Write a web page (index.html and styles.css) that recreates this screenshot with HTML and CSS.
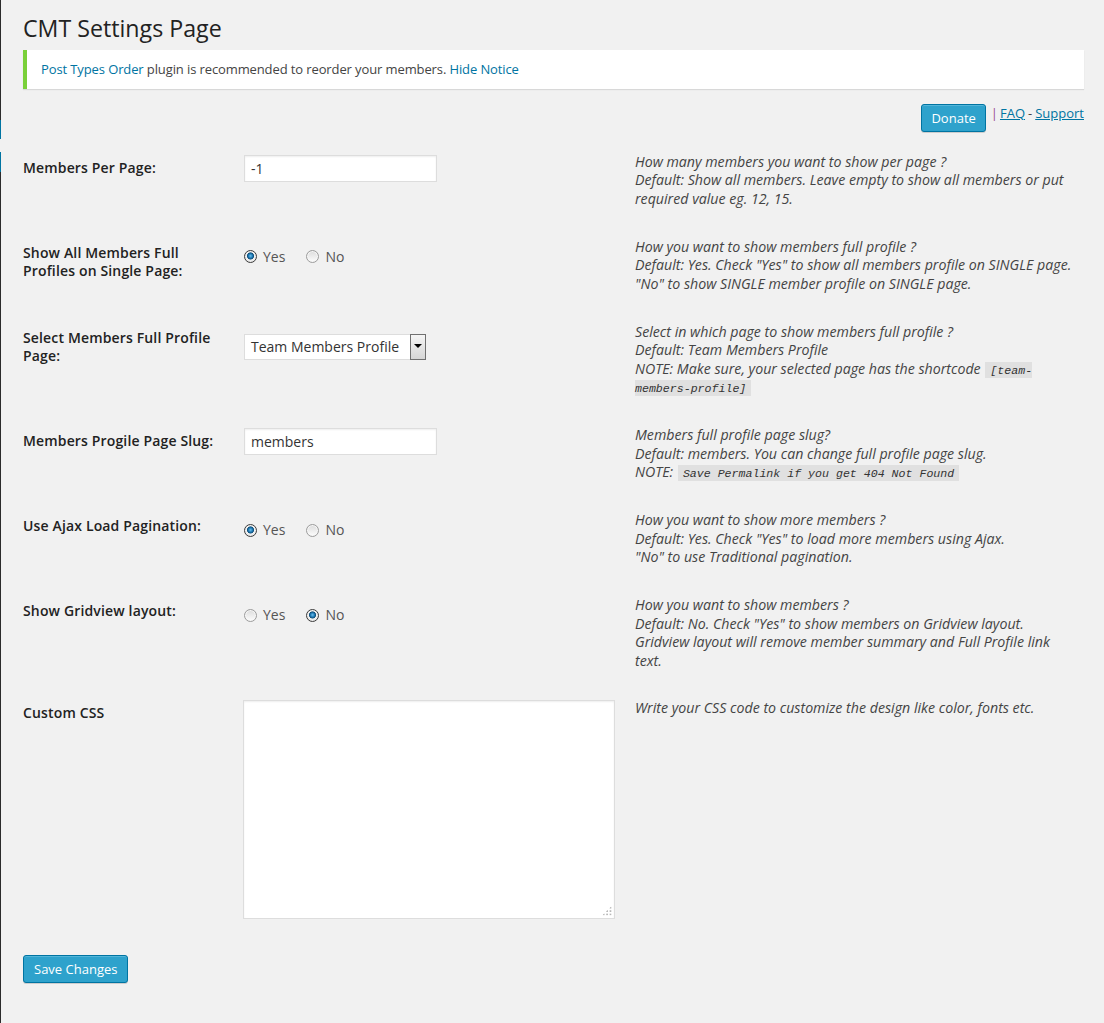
FILE: index.html
```html
<!DOCTYPE html>
<html lang="en">
<head>
<meta charset="utf-8">
<title>CMT Settings Page</title>
<link rel="stylesheet" href="styles.css">
</head>
<body>
<div class="page">
  <div class="edge">
    <span class="seg seg-dark1"></span>
    <span class="seg seg-blue1"></span>
    <span class="seg seg-gap"></span>
    <span class="seg seg-blue2"></span>
    <span class="seg seg-dark2"></span>
  </div>
  <div class="wrap">
    <h2 class="title">CMT Settings Page</h2>
    <div class="notice">
      <p><a class="link" href="#">Post Types Order</a> plugin is recommended to reorder your members. <a class="link" href="#">Hide Notice</a></p>
    </div>
    <div class="toplinks">
      <button class="btn btn-donate" type="button">Donate</button>
      <span class="sep">|</span>
      <a class="ulink" href="#">FAQ</a>
      <span class="dash">-</span>
      <a class="ulink" href="#">Support</a>
    </div>

    <div class="form">
      <div class="row">
        <div class="label">Members Per Page:</div>
        <div class="ctrl"><input class="text" type="text" value="-1"></div>
        <div class="desc">How many members you want to show per page ?<br>Default: Show all members. Leave empty to show all members or put required value eg. 12, 15.</div>
      </div>

      <div class="row">
        <div class="label">Show All Members Full Profiles on Single Page:</div>
        <div class="ctrl">
          <div class="radios">
            <label class="opt"><input class="radio" type="radio" name="full" checked><span>Yes</span></label>
            <label class="opt"><input class="radio" type="radio" name="full"><span>No</span></label>
          </div>
        </div>
        <div class="desc">How you want to show members full profile ?<br>Default: Yes. Check "Yes" to show all members profile on SINGLE page.<br>"No" to show SINGLE member profile on SINGLE page.</div>
      </div>

      <div class="row">
        <div class="label">Select Members Full Profile Page:</div>
        <div class="ctrl">
          <div class="select">
            <span class="select-text">Team Members Profile</span>
            <span class="select-btn"><span class="tri"></span></span>
          </div>
        </div>
        <div class="desc">Select in which page to show members full profile ?<br>Default: Team Members Profile<br>NOTE: Make sure, your selected page has the shortcode <code class="code">[team-members-profile]</code></div>
      </div>

      <div class="row">
        <div class="label">Members Progile Page Slug:</div>
        <div class="ctrl"><input class="text" type="text" value="members"></div>
        <div class="desc">Members full profile page slug?<br>Default: members. You can change full profile page slug.<br>NOTE: <code class="code">Save Permalink if you get 404 Not Found</code></div>
      </div>

      <div class="row">
        <div class="label">Use Ajax Load Pagination:</div>
        <div class="ctrl">
          <div class="radios">
            <label class="opt"><input class="radio" type="radio" name="ajax" checked><span>Yes</span></label>
            <label class="opt"><input class="radio" type="radio" name="ajax"><span>No</span></label>
          </div>
        </div>
        <div class="desc">How you want to show more members ?<br>Default: Yes. Check "Yes" to load more members using Ajax.<br>"No" to use Traditional pagination.</div>
      </div>

      <div class="row">
        <div class="label">Show Gridview layout:</div>
        <div class="ctrl">
          <div class="radios">
            <label class="opt"><input class="radio" type="radio" name="grid"><span>Yes</span></label>
            <label class="opt"><input class="radio" type="radio" name="grid" checked><span>No</span></label>
          </div>
        </div>
        <div class="desc desc-tight">How you want to show members ?<br>Default: No. Check "Yes" to show members on Gridview layout.<br>Gridview layout will remove member summary and Full Profile link text.</div>
      </div>

      <div class="row row-last">
        <div class="label">Custom CSS</div>
        <div class="ctrl">
          <div class="ta-wrap">
            <textarea class="ta"></textarea>
            <span class="grip"></span>
          </div>
        </div>
        <div class="desc">Write your CSS code to customize the design like color, fonts etc.</div>
      </div>
    </div>

    <div class="submit">
      <button class="btn" type="button">Save Changes</button>
    </div>
  </div>
</div>
</body>
</html>
```

FILE: styles.css
```css
html, body {
  margin: 0;
  padding: 0;
  background: #f1f1f1;
}
body {
  font-family: "Open Sans", "Noto Sans", sans-serif;
  color: #222;
  font-size: 13px;
}
.page {
  display: flex;
  min-height: 1023px;
}
.edge {
  width: 1px;
  display: flex;
  flex-direction: column;
  flex: none;
}
.seg { display: block; width: 1px; }
.seg-dark1 { height: 120px; background: #2b2b2b; }
.seg-blue1 { height: 19px; background: #0074a2; }
.seg-gap { height: 13px; }
.seg-blue2 { height: 20px; background: #0074a2; }
.seg-dark2 { flex: 1; background: #2b2b2b; }

.wrap {
  flex: 1;
  margin: 0 20px 0 22px;
}
.title {
  font-size: 23.2px;
  font-weight: 400;
  line-height: 29px;
  margin: 0;
  padding: 14px 0 2px;
  color: #222;
}
.notice {
  margin-top: 5px;
  background: #fff;
  border-left: 4px solid #7ad03a;
  box-shadow: 0 1px 1px 0 rgba(0,0,0,.1);
  padding: 1px 12px;
}
.notice p {
  margin: 6.5px 0;
  padding: 2px;
  font-size: 13px;
  line-height: 19.5px;
  letter-spacing: -0.11px;
  color: #444;
}
.link {
  color: #0074a2;
  text-decoration: none;
}
.toplinks {
  display: flex;
  justify-content: flex-end;
  align-items: flex-start;
  margin-top: 15px;
  font-size: 13px;
  line-height: 19px;
}
.sep {
  color: #9a4d8b;
  margin: 0 2px 0 5px;
}
.ulink {
  color: #0074a2;
  text-decoration: underline;
}
.dash {
  color: #444;
  margin: 0 3px;
}
.btn {
  font-family: "Open Sans", "Noto Sans", sans-serif;
  font-size: 13px;
  height: 28px;
  line-height: 26px;
  padding: 0 10px 1px;
  margin: 0;
  border: 1px solid #0074a2;
  border-radius: 3px;
  background: #2ea2cc;
  color: #fff;
  box-shadow: inset 0 1px 0 rgba(120,200,230,.5), 0 1px 0 rgba(0,0,0,.15);
  cursor: pointer;
}
.btn-donate {
  padding: 0 9px 1px;
}

.form {
  margin-top: 7px;
}
.row {
  display: grid;
  grid-template-columns: 210px 392px 1fr;
}
.label {
  padding: 20px 10px 0 0;
  font-size: 14px;
  font-weight: 600;
  line-height: 18.2px;
  letter-spacing: 0.15px;
  color: #222;
}
.ctrl {
  padding: 15px 10px;
}
.desc {
  padding: 14px 6px 15.5px 10px;
  font-size: 14.2px;
  font-style: italic;
  line-height: 18.5px;
  color: #444;
}
.desc-tight { padding-bottom: 13.5px; }
.row-last .desc { padding-top: 15px; }
.text {
  display: block;
  box-sizing: border-box;
  width: 193px;
  height: 27px;
  margin: 1px 0 0 1px;
  padding: 0 6px;
  border: 1px solid #ddd;
  box-shadow: inset 0 1px 2px rgba(0,0,0,.07);
  background: #fff;
  font-family: "Open Sans", "Noto Sans", sans-serif;
  font-size: 14px;
  color: #333;
  outline: none;
}
.radios {
  display: flex;
  align-items: center;
  gap: 21px;
  margin: 8px 0 0 1px;
  font-size: 14px;
  line-height: 20px;
  color: #555;
}
.opt {
  display: flex;
  align-items: center;
  gap: 6px;
}
.radio {
  -webkit-appearance: none;
  appearance: none;
  width: 13px;
  height: 13px;
  margin: 0;
  border: 1px solid #9c9c9c;
  border-radius: 50%;
  box-sizing: border-box;
  background: linear-gradient(#dcdcdc, #fdfdfd);
  box-shadow: inset 0 0 0 1px #f6f6f6;
}
.radio:checked {
  border-color: #3b3b3b;
  background: radial-gradient(circle at 50% 45%, #6ec0ee 0, #1f7bb6 2px, #0f4e7a 3.2px, #f2f2f2 3.9px, #dcdcdc 100%);
  box-shadow: none;
}
.select {
  display: flex;
  align-items: stretch;
  box-sizing: border-box;
  width: 182px;
  height: 26px;
  margin: 10px 0 0 1px;
  background: #fff;
  border: 1px solid #ddd;
}
.select-text {
  flex: 1;
  padding-left: 6px;
  font-size: 14px;
  line-height: 24px;
  color: #333;
  white-space: nowrap;
  overflow: hidden;
}
.select-btn {
  width: 16px;
  margin: -1px -1px -1px 0;
  border: 1px solid #707070;
  background: linear-gradient(#f5f5f5, #d6d6d6);
  display: flex;
  justify-content: center;
  padding-top: 9px;
  box-sizing: border-box;
}
.tri {
  width: 0;
  height: 0;
  border-left: 4px solid transparent;
  border-right: 4px solid transparent;
  border-top: 4px solid #000;
}
.code {
  font-family: "Liberation Mono", "DejaVu Sans Mono", monospace;
  font-size: 11.6px;
  line-height: 1;
  font-style: italic;
  background: rgba(0,0,0,.07);
  padding: 2px 5px 1px;
  margin: 0 1px;
  color: #333;
}
.ta-wrap {
  position: relative;
  width: 372px;
  height: 219px;
  margin-top: 1px;
}
.ta {
  display: block;
  box-sizing: border-box;
  width: 372px;
  height: 219px;
  margin: 0;
  border: 1px solid #ddd;
  box-shadow: inset 0 1px 2px rgba(0,0,0,.07);
  background: #fff;
  resize: none;
  outline: none;
}
.grip {
  position: absolute;
  right: 3px;
  bottom: 3px;
  width: 10px;
  height: 10px;
  background:
    radial-gradient(circle, #b8b8b8 0.9px, transparent 1.2px) 0 0 / 3.4px 3.4px;
  clip-path: polygon(100% 0, 100% 100%, 0 100%);
}
.submit {
  padding-top: 21px;
  padding-bottom: 30px;
}
```
